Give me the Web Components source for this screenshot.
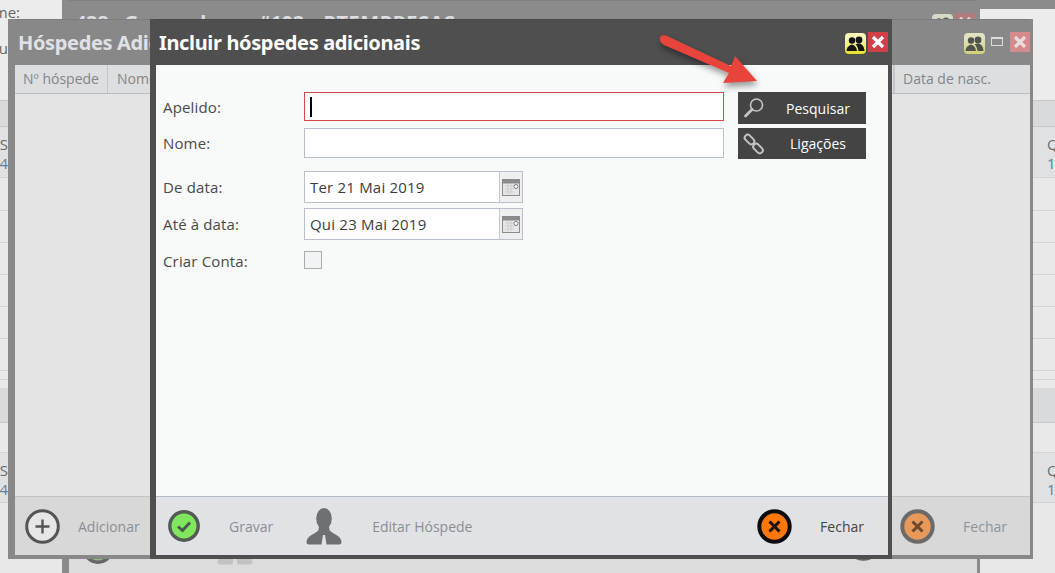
<!DOCTYPE html>
<html lang="pt">
<head>
<meta charset="utf-8">
<title>Incluir hóspedes adicionais</title>
<style>
    html, body { margin: 0; padding: 0; height: 100%; overflow: hidden; }
    body { font-family: "Open Sans", "Noto Sans", sans-serif; font-size: 14px; background: #e8e8e8; }

    .win-back {
        left: 62px; top: 0; width: 918px; height: 590px;
        --frame: #8b8b8b; --fl: 7px; --fr: 3px; --fb: 7px; --bar-h: 45px;
        --title-color: #dcdee2; --title-x: 6px; --title-y: -1px;
        --body-bg: #dcdcdc; --foot-bg: #dcdcdc; --foot-h: 72px; --foot-line: #cfcfcf;
        --actions-r: 2px; --actions-t: 12px;
    }
    .win-mid {
        left: 8px; top: 19px; width: 1025px; height: 540px;
        --frame: #888888; --fl: 7px; --fr: 3px; --fb: 4px; --bar-h: 46px;
        --title-color: #dfe1e6; --title-x: 3px; --title-y: 0px;
        --body-bg: #e4e4e4; --foot-bg: #d8d8d8; --foot-h: 59px; --foot-line: #c4c4c4;
        --actions-r: 0px; --actions-t: 12px;
    }
    .win-top {
        left: 150px; top: 19px; width: 742px; height: 540px;
        --frame: #4f4f4f; --fl: 6px; --fr: 4px; --fb: 4px; --bar-h: 46px;
        --title-color: #ffffff; --title-x: 3px; --title-y: 0px;
        --body-bg: #f8f9f9; --foot-bg: #e0e2e5; --foot-h: 59px; --foot-line: #b4bcc6;
        --actions-r: 0px; --actions-t: 12px;
    }
    .win-mid .end, .win-top .end { margin-left: auto; }
</style>
</head>
<body>

<x-desk>
    <x-back-list slot="left" side="left">
        <div slot="top" style="display:flex;flex-direction:column;align-items:flex-end">
            <x-back-text>Nome:</x-back-text>
            <x-back-text style="margin-top:16px;margin-right:12px">Menu</x-back-text>
        </div>
        <span slot="a">PTS</span><span slot="b">1234</span>
        <span slot="c">PTS</span><span slot="d">1234</span>
    </x-back-list>
    <x-back-list slot="right" side="right">
        <span slot="a">Qui 23</span><span slot="b">12:00</span>
        <span slot="c">Qui 23</span><span slot="d">12:00</span>
    </x-back-list>

    <x-window slot="windows" class="win-back">
        <span slot="title">438 - Grupo alunos #103 - <span style="letter-spacing:.55px;margin-left:4px">PTEMPRESAS</span></span>
        <x-people slot="actions" faded="2"></x-people>
        <x-close slot="actions" faded="2"></x-close>
        <div slot="footer" style="display:contents">
            <x-foot-action style="margin-left:13px;--gap:0" icon="check" tone="back"></x-foot-action>
            <x-foot-action style="margin-left:103px;--gap:0;margin-top:-2px" icon="person" tone="back"></x-foot-action>
            <x-foot-action style="margin-left:auto;margin-right:96px;--gap:0;margin-bottom:8px" icon="cross" tone="back"></x-foot-action>
        </div>
    </x-window>

    <x-window slot="windows" class="win-mid">
        <span slot="title">Hóspedes Adicionais</span>
        <x-people slot="actions" faded="1"></x-people>
        <x-minimize slot="actions"></x-minimize>
        <x-close slot="actions" faded="1"></x-close>
        <x-grid-head>
            <span>Nº hóspede</span>
            <span>Nome</span>
            <span>Data de nasc.</span>
        </x-grid-head>
        <div slot="footer" style="display:contents">
            <x-foot-action style="margin-left:10px;--gap:18px" icon="plus" tone="dim">Adicionar</x-foot-action>
            <x-foot-action class="end" style="margin-right:23px;--gap:28px" icon="cross" tone="fade">Fechar</x-foot-action>
        </div>
    </x-window>

    <x-window slot="windows" class="win-top">
        <span slot="title">Incluir hóspedes adicionais</span>
        <x-people slot="actions"></x-people>
        <x-close slot="actions"></x-close>
        <x-guest-form>
            <x-form-row slot="fields" label="Apelido:" height="29"><x-text-box focused></x-text-box></x-form-row>
            <x-form-row slot="fields" label="Nome:" height="30"><x-text-box></x-text-box></x-form-row>
            <x-form-row slot="fields" label="De data:" height="30" style="margin-top:6px"><x-date-box>Ter 21 Mai 2019</x-date-box></x-form-row>
            <x-form-row slot="fields" label="Até à data:" height="30"><x-date-box>Qui 23 Mai 2019</x-date-box></x-form-row>
            <x-form-row slot="fields" label="Criar Conta:" height="18" style="margin-top:6px"><x-check-box></x-check-box></x-form-row>
            <x-dark-button slot="buttons" icon="search" height="32">Pesquisar</x-dark-button>
            <x-dark-button slot="buttons" icon="link" height="31">Ligações</x-dark-button>
        </x-guest-form>
        <div slot="footer" style="display:contents">
            <x-foot-action style="margin-left:12px;--gap:29px" icon="check" tone="dim">Gravar</x-foot-action>
            <x-foot-action style="margin-left:33px;--gap:30px" icon="person" tone="dim">Editar Hóspede</x-foot-action>
            <x-foot-action class="end" style="margin-right:24px;--gap:28px" icon="cross" tone="live">Fechar</x-foot-action>
        </div>
    </x-window>

    <x-arrow slot="windows"></x-arrow>
</x-desk>

<script>
const ICONS = {
    search: `<svg width="22" height="22" viewBox="0 0 22 22" fill="none" stroke="#c4c4c4"><circle cx="13.5" cy="8" r="6" stroke-width="1.6"/><path d="M9 12.500L2.500 19" stroke-width="2.800" stroke-linecap="round"/></svg>`,
    link: `<svg width="22" height="22" viewBox="0 0 22 22" fill="none" stroke="#c4c4c4" stroke-width="2"><rect x="-5.500" y="-3" width="11" height="6" rx="3" transform="translate(6.500 6.500) rotate(45)"/><rect x="-5.500" y="-3" width="11" height="6" rx="3" transform="translate(15 15.500) rotate(45)"/></svg>`,
    calendar: `<svg width="18" height="17" viewBox="0 0 18 17"><rect x=".5" y=".5" width="17" height="16" fill="#e6e6e6" stroke="#8b8b8b"/><rect x="1" y="1" width="16" height="3.500" fill="#8b8b8b"/><path d="M3 7h9M3 10h9M3 13h9M6 5v10M9 5v10" stroke="#cfcfcf"/><circle cx="14" cy="7.500" r="2" fill="#fff" stroke="#777"/></svg>`,
    check: `<svg width="32" height="32" viewBox="0 0 32 32"><circle cx="16" cy="16" r="14.200" fill="var(--check,#7fe65e)" stroke="var(--ring,#555a55)" stroke-width="3.400"/><path d="M10 16.500l4.500 4L22 12.500" fill="none" stroke="#4c5a4c" stroke-width="3"/></svg>`,
    plus: `<svg width="35" height="35" viewBox="0 0 35 35"><circle cx="17.500" cy="17.500" r="15.800" fill="#e6e6e6" stroke="#555" stroke-width="3"/><path d="M17.500 10.500v14M10.500 17.500h14" stroke="#555" stroke-width="2.400"/></svg>`,
    cross: `<svg width="35" height="35" viewBox="0 0 35 35"><circle cx="17.500" cy="17.500" r="15.200" fill="var(--cross,#ff770a)" stroke="var(--ring,#0c0c0c)" stroke-width="4"/><path d="M12.500 12.500l10 10M22.500 12.500l-10 10" stroke="var(--mark,#1a1208)" stroke-width="3"/></svg>`,
    person: `<svg width="36" height="37" viewBox="0 0 36 37" fill="var(--person,#6e7074)"><ellipse cx="18" cy="10.500" rx="7.800" ry="10.500"/><path d="M13 18L12.500 22C10 26 1.500 27 .5 33.500C.4 35.500 1 36.500 3 36.500H15.500L17 27H19L20.500 36.500H33C35 36.500 35.600 35.500 35.500 33.500C34.500 27 26 26 23.500 22L23 18Z"/></svg>`
};

class Desk extends HTMLElement {
    connectedCallback() {
        this.attachShadow({ mode: 'open' });
        this.shadowRoot.innerHTML = `
            <style>
                :host { display: block; position: relative; width: 100%; height: 573px; overflow: hidden; background: #e8e8e8; }
                .columns { display: flex; justify-content: space-between; height: 100%; }
                .left { width: 62px; }
                .right { width: 75px; border-top: 9px solid #8b8b8b; }
            </style>
            <div class="columns">
                <div class="left"><slot name="left"></slot></div>
                <div class="right"><slot name="right"></slot></div>
            </div>
            <slot name="windows"></slot>
        `;
    }
}

class BackList extends HTMLElement {
    connectedCallback() {
        const isLeft = this.getAttribute('side') === 'left';
        this.attachShadow({ mode: 'open' });
        // the right list starts 9px lower because the bar above it takes that room
        const first = isLeft ? 100 : 91;
        const align = isLeft ? 'flex-end' : 'flex-start';
        this.shadowRoot.innerHTML = `
            <style>
                :host { display: block; color: #666b70; font-size: 15px; overflow: hidden; white-space: nowrap; }
                .top { height: ${first}px; background: #ececec; box-sizing: border-box; padding: 2px ${isLeft ? 42 : 0}px 0 0; overflow: hidden; }
                .band { background: #d9dadb; border-top: 1px solid #c8c8c8; border-bottom: 1px solid #c8c8c8; box-sizing: border-box; }
                .row { border-bottom: 1px solid #d4d4d4; box-sizing: border-box; background: #e9e9e9; }
                .info { background: #e0e1e3; display: flex; flex-direction: column; justify-content: center; align-items: ${align}; line-height: 19px;
                    padding: 4px ${isLeft ? 54 : 0}px 0 ${isLeft ? 0 : 67}px; overflow: hidden; }
                .sub { color: #5d7f9c; }
            </style>
            <div class="top"><slot name="top"></slot></div>
            <div class="band" style="height:27px"></div>
            <div class="row info" style="height:51px"><div><slot name="a"></slot></div><div class="sub"><slot name="b"></slot></div></div>
            <div class="row" style="height:33px"></div>
            <div class="row" style="height:32px"></div>
            <div class="row" style="height:32px"></div>
            <div class="row" style="height:32px"></div>
            <div class="row" style="height:32px"></div>
            <div class="row" style="height:32px"></div>
            <div class="row" style="height:9px"></div>
            <div class="row" style="height:8px;border-bottom:0"></div>
            <div class="band" style="height:35px;border-top:0"></div>
            <div class="row" style="height:30px"></div>
            <div class="row info" style="height:50px"><div><slot name="c"></slot></div><div class="sub"><slot name="d"></slot></div></div>
        `;
    }
}

class BackText extends HTMLElement {
    connectedCallback() {
        this.attachShadow({ mode: 'open' }).innerHTML = `
            <style>:host { display: block; line-height: 20px; color: #666; }</style><slot></slot>`;
    }
}

class Win extends HTMLElement {
    connectedCallback() {
        this.attachShadow({ mode: 'open' });
        this.shadowRoot.innerHTML = `
            <style>
                :host {
                    position: absolute; display: flex; flex-direction: column; box-sizing: border-box;
                    border-style: solid; border-color: var(--frame);
                    border-width: 0 var(--fr) var(--fb) var(--fl);
                }
                .bar {
                    height: var(--bar-h); flex: none; background: var(--frame); position: relative;
                    display: flex; align-items: center; justify-content: space-between;
                    border-top: 1px solid rgba(0,0,0,.08); box-sizing: border-box;
                }
                .title {
                    padding-left: var(--title-x); margin-top: calc(var(--title-y) * 2);
                    font: bold 20px "Noto Sans", "Open Sans", sans-serif; letter-spacing: -.35px;
                    color: var(--title-color); white-space: nowrap;
                }
                .actions {
                    position: absolute; right: var(--actions-r); top: var(--actions-t);
                    display: flex; align-items: flex-start; gap: 2px;
                }
                .body { flex: 1; min-height: 0; background: var(--body-bg); }
                .foot {
                    height: var(--foot-h); flex: none; box-sizing: border-box; background: var(--foot-bg);
                    border-top: 1px solid var(--foot-line); display: flex; align-items: center;
                }
            </style>
            <div class="bar">
                <div class="title"><slot name="title"></slot></div>
                <div class="actions"><slot name="actions"></slot></div>
            </div>
            <div class="body"><slot></slot></div>
            <div class="foot"><slot name="footer"></slot></div>
        `;
    }
}

class People extends HTMLElement {
    connectedCallback() {
        const f = this.getAttribute('faded');
        const top = f == 2 ? '#d8d8c4' : f ? '#e2e2c0' : '#f8f7b4';
        const low = f == 2 ? '#b0b078' : f ? '#d2d07a' : '#e9e12a';
        const ink = f == 2 ? '#5a5a58' : f ? '#54544e' : '#141414';
        this.attachShadow({ mode: 'open' }).innerHTML = `
            <style>:host { display: block; width: 21px; height: 21px; margin-top: 1px; }
            .b { width: 21px; height: 21px; border-radius: 4px; background: linear-gradient(${top} 25%, ${low}); display: block; }</style>
            <svg class="b" viewBox="0 0 21 21" fill="${ink}">
                <circle cx="7" cy="7.500" r="3.200"/><circle cx="14" cy="7" r="3.400"/>
                <path d="M1.500 18c.3-4 3-6 5.500-6.500 2.500.5 4.500 2.500 5 6.500z"/>
                <path d="M10.500 11.200c1.200-.4 2.400-.7 3.700-.7 2.600.5 5 2.500 5.300 7.500h-6c-.3-2.800-1.300-5.300-3-6.800z"/>
            </svg>`;
    }
}

class Close extends HTMLElement {
    connectedCallback() {
        const f = this.getAttribute('faded');
        const bg = f == 2 ? '#b37c7c' : f ? '#d78a8b' : '#d23f48';
        const fg = f ? '#e9dcdc' : '#ffffff';
        this.attachShadow({ mode: 'open' }).innerHTML = `
            <style>:host { display: block; width: 20px; height: 20px; background: ${bg}; }
            svg { display: block; }</style>
            <svg width="20" height="20" viewBox="0 0 20 20"><path d="M5 5l10 10M15 5L5 15" stroke="${fg}" stroke-width="3.200"/></svg>`;
    }
}

class Minimize extends HTMLElement {
    connectedCallback() {
        this.attachShadow({ mode: 'open' }).innerHTML = `
            <style>:host { display: block; width: 12px; height: 9px; box-sizing: border-box; border: 1px solid #dcdcdc; border-top-width: 2px; margin: 5px 5px 0 4px; }</style>`;
    }
}

class GridHead extends HTMLElement {
    connectedCallback() {
        this.attachShadow({ mode: 'open' }).innerHTML = `
            <style>
                :host { display: grid; grid-template-columns: 93px 1fr 136px; height: 29px; box-sizing: border-box;
                    background: #dcdee0; border-bottom: 1px solid #b9bdc6; color: #83868a; font-size: 14px; line-height: 28px; }
                ::slotted(span) { padding-left: 8px; border-right: 1px solid #c4c6ca; white-space: nowrap; }
                ::slotted(span:nth-child(2)) { padding-left: 9px; }
                ::slotted(span:last-child) { border-right: 0; border-left: 1px solid #c4c6ca; }
            </style><slot></slot>`;
    }
}

class GuestForm extends HTMLElement {
    connectedCallback() {
        this.attachShadow({ mode: 'open' }).innerHTML = `
            <style>
                :host { display: flex; gap: 14px; padding: 27px 0 0 7px; }
                .fields { width: 561px; display: flex; flex-direction: column; gap: 7px; }
                .buttons { width: 128px; display: flex; flex-direction: column; gap: 4px; }
            </style>
            <div class="fields"><slot name="fields"></slot></div>
            <div class="buttons"><slot name="buttons"></slot></div>`;
    }
}

class FormRow extends HTMLElement {
    connectedCallback() {
        const h = this.getAttribute('height');
        this.attachShadow({ mode: 'open' }).innerHTML = `
            <style>
                :host { display: grid; grid-template-columns: 141px 1fr; align-items: center; height: ${h}px; color: #4a4a4a; font-size: 15px; letter-spacing: .15px; }
                label { white-space: nowrap; }
            </style>
            <label>${this.getAttribute('label')}</label><div style="height:100%"><slot></slot></div>`;
    }
}

class TextBox extends HTMLElement {
    connectedCallback() {
        const focused = this.hasAttribute('focused');
        this.attachShadow({ mode: 'open' }).innerHTML = `
            <style>
                :host { display: flex; align-items: center; height: 100%; box-sizing: border-box; background: #fff; padding-left: 5px;
                    border: 1px solid ${focused ? '#d4494c' : '#b9c0cc'}; }
                i { display: block; width: 2px; height: 20px; background: #000; }
            </style>${focused ? '<i></i>' : ''}`;
    }
}

class DateBox extends HTMLElement {
    connectedCallback() {
        this.attachShadow({ mode: 'open' }).innerHTML = `
            <style>
                :host { display: flex; height: 100%; width: 219px; box-sizing: border-box; background: #fff; border: 1px solid #b9c0cc; color: #3d3d3d; font-size: 15px; letter-spacing: .2px; }
                .v { flex: 1; padding-left: 5px; line-height: 30px; white-space: nowrap; }
                .c { width: 23px; box-sizing: border-box; flex: none; background: #eeeff0; border-left: 1px solid #c4c9d2; display: flex; align-items: center; justify-content: center; }
            </style>
            <div class="v"><slot></slot></div><div class="c">${ICONS.calendar}</div>`;
    }
}

class CheckBox extends HTMLElement {
    connectedCallback() {
        this.attachShadow({ mode: 'open' }).innerHTML = `
            <style>:host { display: block; width: 18px; height: 18px; box-sizing: border-box; background: #f1f3f5; border: 1px solid #aaa; }</style>`;
    }
}

class DarkButton extends HTMLElement {
    connectedCallback() {
        this.attachShadow({ mode: 'open' }).innerHTML = `
            <style>
                :host { display: flex; align-items: center; height: ${this.getAttribute('height')}px; background: #444444; color: #fff; font-size: 14px; }
                .i { width: 32px; flex: none; display: flex; justify-content: center; }
                .t { flex: 1; text-align: center; white-space: nowrap; }
                svg { display: block; }
            </style>
            <div class="i">${ICONS[this.getAttribute('icon')]}</div><div class="t"><slot></slot></div>`;
    }
}

class FootAction extends HTMLElement {
    connectedCallback() {
        const tones = {
            dim: '--label:#8b8f94;',
            live: '--label:#444;',
            fade: '--label:#8a93a0;--cross:#e8995a;--ring:#6a6a6a;--mark:#6b4a30;',
            back: '--label:#888;--check:#8fbb80;--ring:#666;--cross:#c9a080;--person:#c2c2c2;'
        };
        this.attachShadow({ mode: 'open' }).innerHTML = `
            <style>
                :host { display: flex; align-items: center; gap: var(--gap); color: var(--label); font-size: 14px; ${tones[this.getAttribute('tone')]} }
                svg { display: block; }
                .i { filter: blur(.3px); }
            </style>
            <div class="i">${ICONS[this.getAttribute('icon')]}</div><span style="white-space:nowrap"><slot></slot></span>`;
    }
}

class Arrow extends HTMLElement {
    connectedCallback() {
        this.attachShadow({ mode: 'open' }).innerHTML = `
            <style>
                :host { position: absolute; left: 650px; top: 28px; width: 120px; height: 70px; pointer-events: none; }
                svg { display: block; filter: drop-shadow(1px 4px 3px rgba(0,0,0,.4)); }
            </style>
            <svg width="120" height="70" viewBox="0 0 120 70">
                <path d="M10 9.500C9.500 13 11 15.500 14 17L79 45L73 55L107 53L85 28L81 38L18 8.500C14.500 6.500 11 7 10 9.500Z" fill="#e8443b"/>
            </svg>`;
    }
}

customElements.define('x-desk', Desk);
customElements.define('x-back-list', BackList);
customElements.define('x-back-text', BackText);
customElements.define('x-window', Win);
customElements.define('x-people', People);
customElements.define('x-close', Close);
customElements.define('x-minimize', Minimize);
customElements.define('x-grid-head', GridHead);
customElements.define('x-guest-form', GuestForm);
customElements.define('x-form-row', FormRow);
customElements.define('x-text-box', TextBox);
customElements.define('x-date-box', DateBox);
customElements.define('x-check-box', CheckBox);
customElements.define('x-dark-button', DarkButton);
customElements.define('x-foot-action', FootAction);
customElements.define('x-arrow', Arrow);
</script>
</body>
</html>
